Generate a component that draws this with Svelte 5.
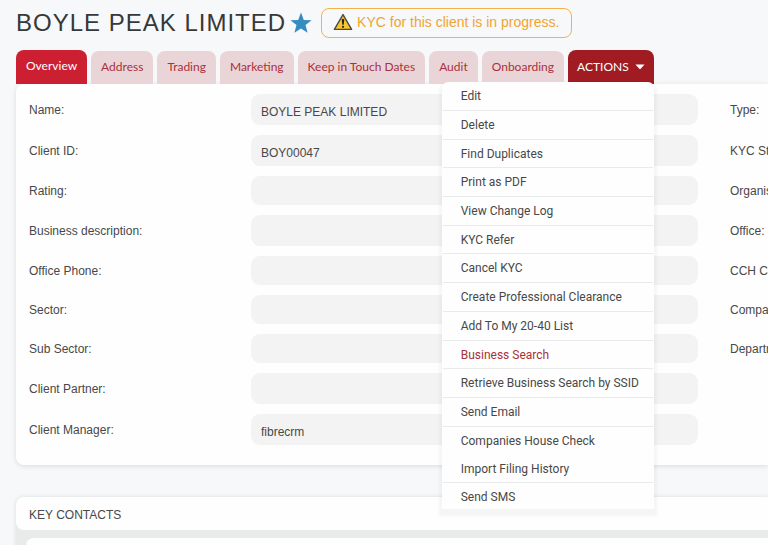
<script>
  const tabs = ['Overview', 'Address', 'Trading', 'Marketing', 'Keep in Touch Dates', 'Audit', 'Onboarding'];

  const rows = [
    { label: 'Name:', value: 'BOYLE PEAK LIMITED', tall: true, side: 'Type:' },
    { label: 'Client ID:', value: 'BOY00047', tall: true, side: 'KYC Status:' },
    { label: 'Rating:', value: '', side: 'Organisation:' },
    { label: 'Business description:', value: '', tall: true, side: 'Office:' },
    { label: 'Office Phone:', value: '', side: 'CCH Code:' },
    { label: 'Sector:', value: '', side: 'Company:' },
    { label: 'Sub Sector:', value: '', side: 'Department:' },
    { label: 'Client Partner:', value: '', tall: true, side: '' },
    { label: 'Client Manager:', value: 'fibrecrm', tall: true, side: '' }
  ];

  const actions = [
    { text: 'Edit' },
    { text: 'Delete' },
    { text: 'Find Duplicates', tight: true },
    { text: 'Print as PDF' },
    { text: 'View Change Log' },
    { text: 'KYC Refer', tight: true },
    { text: 'Cancel KYC' },
    { text: 'Create Professional Clearance' },
    { text: 'Add To My 20-40 List' },
    { text: 'Business Search', tight: true, active: true },
    { text: 'Retrieve Business Search by SSID' },
    { text: 'Send Email' },
    { text: 'Companies House Check', plain: true, tight: true },
    { text: 'Import Filing History', tight: true },
    { text: 'Send SMS', plain: true, tight: true }
  ];
</script>

<div class="page">
  <header>
    <h1>BOYLE PEAK LIMITED</h1>
    <svg class="star" viewBox="0 0 22 22" aria-hidden="true">
      <path d="M11 0.5 L13.8 8 L21.6 8.2 L15.5 13.1 L17.6 20.8 L11 16.5 L4.4 20.8 L6.5 13.1 L0.4 8.2 L8.2 8 Z" fill="#368cbf" />
    </svg>
    <p class="notice">
      <svg class="warn" viewBox="0 0 20 18" aria-hidden="true">
        <path d="M10 1.6 L18.6 16.4 H1.4 Z" fill="#fbc62a" stroke="#4a4a4a" stroke-width="1.4" stroke-linejoin="round" />
        <path d="M8.7 6.4 Q10 5 11.3 6.4 L10.7 11.8 H9.3 Z" fill="#222" />
        <circle cx="10" cy="13.8" r="1.1" fill="#222" />
      </svg>
      <span>KYC for this client is in progress.</span>
    </p>
  </header>

  <nav>
    {#each tabs as tab, i}
      <a href="#{tab}" class:current={i === 0}>{tab}</a>
    {/each}
    <div class="dropdown">
      <button type="button" class="toggle" aria-expanded="true">
        ACTIONS
        <svg viewBox="0 0 10 6" aria-hidden="true"><path d="M0.5 0.5 H9.5 L5.7 4.8 Q5 5.5 4.3 4.8 Z" fill="#fff" /></svg>
      </button>
      <ul class="menu">
        {#each actions as item}
          <li class:plain={item.plain} class:tight={item.tight}>
            <a href="#action" class:active={item.active}>{item.text}</a>
          </li>
        {/each}
      </ul>
    </div>
  </nav>

  <main class="card">
    {#each rows as row, i}
      <div class="row">
        <label for="field-{i}">{row.label}</label>
        <input id="field-{i}" class:tall={row.tall} value={row.value} readonly />
        <span class="side">{row.side}</span>
      </div>
    {/each}
  </main>

  <section class="contacts">
    <h2>KEY CONTACTS</h2>
    <div class="list"></div>
  </section>
</div>

<style>
  :global(body) {
    margin: 0;
    background: #f7f8fa;
    overflow: hidden;
  }

  .page {
    padding-left: 16px;
    font: 12px/16px "Liberation Sans", Arial, sans-serif;
    color: #484848;
  }

  header {
    display: flex;
    align-items: center;
    padding-top: 8px;
  }

  h1 {
    margin: 0;
    font-size: 24px;
    line-height: 30px;
    font-weight: 400;
    letter-spacing: 1px;
    color: #383838;
    white-space: nowrap;
  }

  .star {
    width: 22px;
    height: 22px;
    margin: 0 9px 0 4px;
  }

  .notice {
    display: flex;
    align-items: center;
    gap: 4px;
    box-sizing: border-box;
    height: 30px;
    margin: 0;
    padding: 0 12px 2px 11px;
    border: 1px solid #f5b04d;
    border-radius: 8px;
    font-size: 14px;
    color: #f0a431;
    white-space: nowrap;
  }

  .warn {
    width: 20px;
    height: 18px;
  }

  nav {
    display: flex;
    align-items: flex-end;
    gap: 4px;
    margin-top: 12px;
    font-family: Lato, sans-serif;
  }

  nav > a,
  .toggle {
    box-sizing: border-box;
    height: 33px;
    padding: 0 10px;
    border-radius: 8px 8px 0 0;
    background: #e9d5d7;
    color: #ac303b;
    font-size: 12px;
    line-height: 32px;
    text-decoration: none;
    white-space: nowrap;
  }

  nav > a.current {
    height: 34px;
    background: #cd1f32;
    color: #fff;
  }

  .dropdown {
    position: relative;
  }

  .toggle {
    display: flex;
    align-items: center;
    gap: 6px;
    height: 34px;
    padding: 0 9px;
    border: 0;
    background: #a01c22;
    color: #fff;
    font-family: inherit;
  }

  .toggle svg {
    width: 10px;
    height: 6px;
  }

  .menu {
    position: absolute;
    top: 32px;
    right: 0;
    z-index: 2;
    box-sizing: border-box;
    width: 212px;
    margin: 0;
    padding: 0 1px;
    list-style: none;
    border-radius: 6px 6px 0 0;
    background: #fefefe;
    box-shadow: 0 4px 3px 3px rgba(60, 70, 70, 0.05);
    font: 12px/28px Roboto, "Liberation Sans", sans-serif;
  }

  .menu li {
    box-sizing: border-box;
    height: 29px;
    border-bottom: 1px solid #e9ebeb;
  }

  .menu li.tight {
    height: 28px;
  }

  .menu li.plain {
    border-bottom: 0;
  }

  .menu li:last-child {
    height: 26px;
  }

  .menu a {
    display: block;
    padding-left: 18px;
    color: #484848;
    text-decoration: none;
    white-space: nowrap;
  }

  .menu a.active {
    color: #a83238;
  }

  .card {
    display: flex;
    flex-direction: column;
    gap: 10px;
    padding: 10px 0 20px 13px;
    border-radius: 8px 0 0 8px;
    background: #fefefe;
    box-shadow: 0 1px 5px rgba(60, 70, 70, 0.16);
  }

  .row {
    display: grid;
    grid-template-columns: 190px minmax(0, 1fr) 38px;
    column-gap: 32px;
    align-items: center;
  }

  input {
    box-sizing: border-box;
    width: 100%;
    height: 29px;
    margin: 0;
    padding: 4px 10px 0;
    border: 0;
    border-radius: 9px;
    background: #f3f3f3;
    color: #484848;
    font: inherit;
    outline: 0;
  }

  input.tall {
    height: 31px;
  }

  .side {
    white-space: nowrap;
  }

  .contacts {
    margin-top: 32px;
    border-radius: 8px 0 0 0;
    background: #e9ebeb;
    box-shadow: 0 0 4px rgba(60, 70, 70, 0.16);
  }

  h2 {
    margin: 0;
    padding: 10px 13px 7px;
    border-radius: 8px 0 0 8px;
    background: #fefefe;
    font-size: 12px;
    line-height: 16px;
    font-weight: 400;
  }

  .list {
    height: 32px;
    margin: 8px 0 0 10px;
    border-radius: 8px 0 0 0;
    background: #fefefe;
  }
</style>
